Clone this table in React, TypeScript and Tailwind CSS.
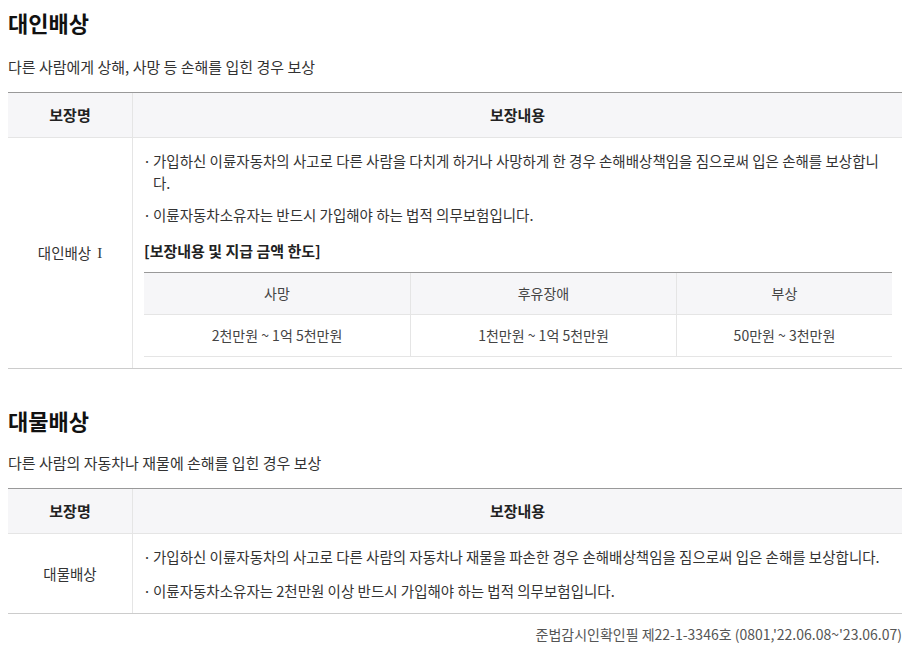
const font = { fontFamily: '"Noto Sans CJK KR", "Noto Sans", sans-serif' };

type Limit = { label: string; amount: string };

const limits: Limit[] = [
  { label: '사망', amount: '2천만원 ~ 1억 5천만원' },
  { label: '후유장애', amount: '1천만원 ~ 1억 5천만원' },
  { label: '부상', amount: '50만원 ~ 3천만원' },
];

function Bullet({ children }: { children: React.ReactNode }) {
  return (
    <li className="flex text-[14.5px] leading-[22px] text-[#333]">
      <span className="w-[9px] shrink-0 -ml-[1px]">·</span>
      <span className="ml-[1px]">{children}</span>
    </li>
  );
}

function HeaderRow() {
  return (
    <div className="grid grid-cols-[125px_1fr] h-[45px] bg-[#f6f6f8] border-b border-[#e5e5e5] text-[15px] font-bold text-[#222]">
      <div className="flex items-center justify-center border-r border-[#e5e5e5]">보장명</div>
      <div className="flex items-center justify-center">보장내용</div>
    </div>
  );
}

function LimitTable() {
  return (
    <div className="border-t border-[#999] text-[14px] text-[#444]">
      <div className="grid grid-cols-[266px_266px_1fr] h-[42px] bg-[#f6f6f8] border-b border-[#e5e5e5]">
        {limits.map((l, i) => (
          <div
            key={l.label}
            className={`flex items-center justify-center ${i > 0 ? 'border-l border-[#e5e5e5]' : ''}`}
          >
            {l.label}
          </div>
        ))}
      </div>
      <div className="grid grid-cols-[266px_266px_1fr] h-[42px] border-b border-[#e5e5e5]">
        {limits.map((l, i) => (
          <div
            key={l.label}
            className={`flex items-center justify-center ${i > 0 ? 'border-l border-[#e5e5e5]' : ''}`}
          >
            {l.amount}
          </div>
        ))}
      </div>
    </div>
  );
}

export default function App() {
  return (
    <div className="min-h-screen bg-white pl-2 pr-[9px]" style={font}>
      {/* 대인배상 */}
      <section className="pt-[7px]">
        <h2 className="text-[22px] leading-[30px] font-bold text-[#111]">대인배상</h2>
        <p className="mt-[19px] text-[15px] leading-[22px] text-[#333]">
          다른 사람에게 상해, 사망 등 손해를 입힌 경우 보상
        </p>
        <div className="mt-[14px] border-t border-[#999]">
          <HeaderRow />
          <div className="grid grid-cols-[125px_1fr] border-b border-[#ccc]">
            <div className="flex items-center justify-center border-r border-[#e5e5e5] text-[14.5px] text-[#333]">
              대인배상
              <span className="ml-[6px] text-[15px]" style={{ fontFamily: '"Liberation Serif", serif' }}>
                I
              </span>
            </div>
            <div className="pl-[11px] pr-[10px] pt-[12px] pb-[11px]">
              <ul className="flex flex-col gap-[10px]">
                <Bullet>
                  가입하신 이륜자동차의 사고로 다른 사람을 다치게 하거나 사망하게 한 경우 손해배상책임을 짐으로써 입은 손해를 보상합니다.
                </Bullet>
                <Bullet>이륜자동차소유자는 반드시 가입해야 하는 법적 의무보험입니다.</Bullet>
              </ul>
              <p className="mt-[14px] text-[15px] leading-[22px] font-bold text-[#222]">[보장내용 및 지급 금액 한도]</p>
              <div className="mt-[10px]">
                <LimitTable />
              </div>
            </div>
          </div>
        </div>
      </section>

      {/* 대물배상 */}
      <section className="mt-[36px]">
        <h2 className="text-[22px] leading-[30px] font-bold text-[#111]">대물배상</h2>
        <p className="mt-[17px] text-[15px] leading-[22px] text-[#333]">
          다른 사람의 자동차나 재물에 손해를 입힌 경우 보상
        </p>
        <div className="mt-[14px] border-t border-[#999]">
          <HeaderRow />
          <div className="grid grid-cols-[125px_1fr] border-b border-[#ccc]">
            <div className="flex items-center justify-center border-r border-[#e5e5e5] text-[14.5px] text-[#333]">
              대물배상
            </div>
            <div className="pl-[11px] pr-[10px] pt-[12px] pb-[11px]">
              <ul className="flex flex-col gap-[12px]">
                <Bullet>
                  가입하신 이륜자동차의 사고로 다른 사람의 자동차나 재물을 파손한 경우 손해배상책임을 짐으로써 입은 손해를 보상합니다.
                </Bullet>
                <Bullet>이륜자동차소유자는 2천만원 이상 반드시 가입해야 하는 법적 의무보험입니다.</Bullet>
              </ul>
            </div>
          </div>
        </div>
        <p className="mt-[9px] text-right text-[14px] leading-[22px] text-[#555]">
          준법감시인확인필 제22-1-3346호 (0801,'22.06.08~'23.06.07)
        </p>
      </section>
    </div>
  );
}
